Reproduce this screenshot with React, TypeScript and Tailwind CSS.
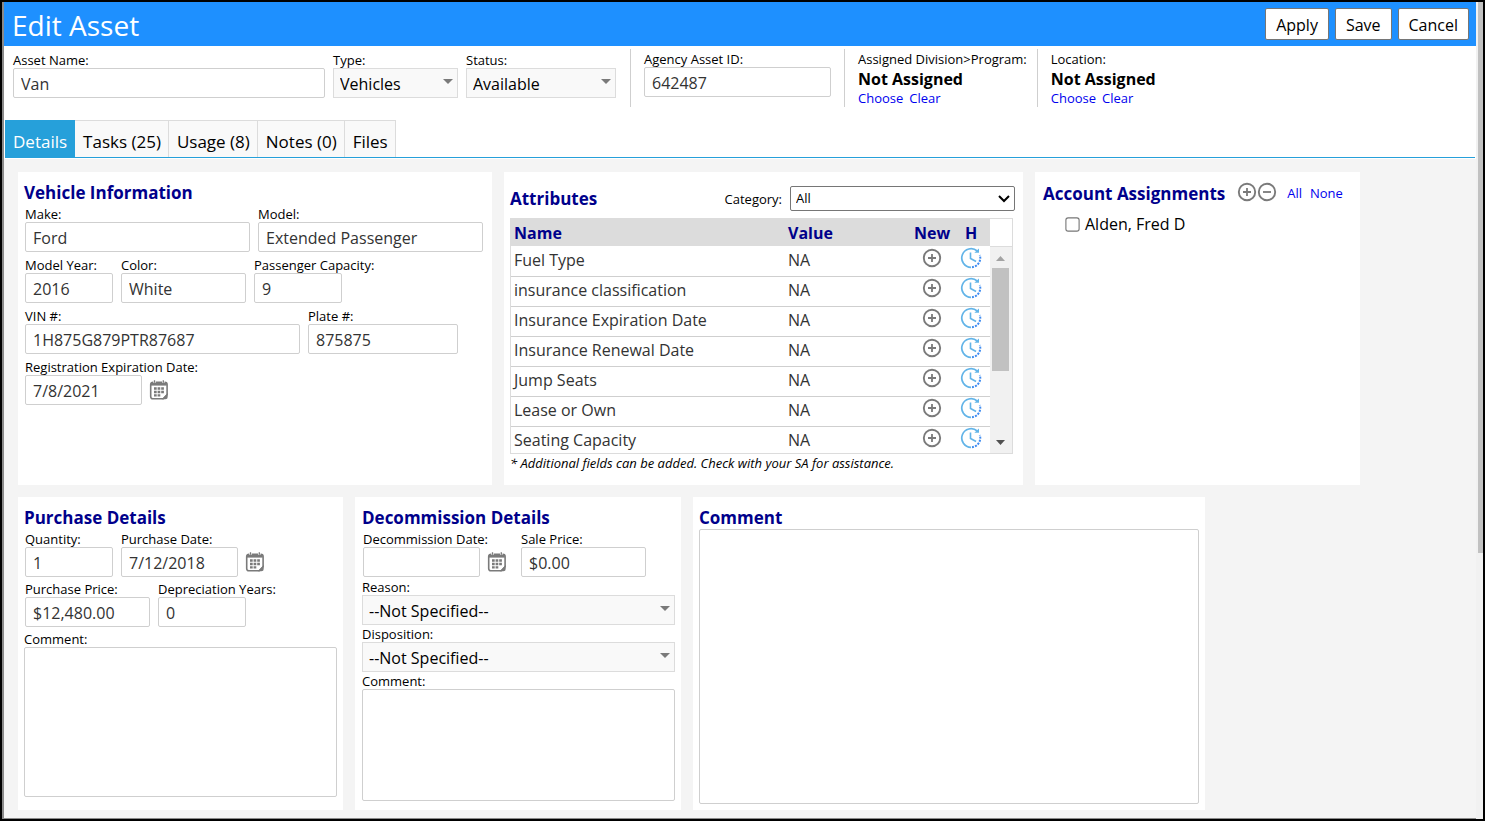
import { FC, ReactNode, useId, useState } from 'react';
import { twMerge } from 'tailwind-merge';

type FieldProps = {
  label: string;
  className?: string;
};

const attributes = [
  'Fuel Type',
  'insurance classification',
  'Insurance Expiration Date',
  'Insurance Renewal Date',
  'Jump Seats',
  'Lease or Own',
  'Seating Capacity',
];

const tabs = ['Details', 'Tasks (25)', 'Usage (8)', 'Notes (0)', 'Files'];

const PlusIcon: FC = () => (
  <svg width="20" height="20" viewBox="0 0 20 20" fill="none" stroke="#7a7a7a">
    <circle cx="10" cy="10" r="8.2" strokeWidth="1.9" />
    <path d="M10 6v8M6 10h8" strokeWidth="1.8" />
  </svg>
);

const MinusIcon: FC = () => (
  <svg width="20" height="20" viewBox="0 0 20 20" fill="none" stroke="#7a7a7a">
    <circle cx="10" cy="10" r="8.2" strokeWidth="1.9" />
    <path d="M6 10h8" strokeWidth="1.8" />
  </svg>
);

const HistoryIcon: FC = () => (
  <svg width="22" height="22" viewBox="0 0 22 22" fill="none">
    <path
      d="M17.2 4A9.3 9.3 0 1 0 11 20.3"
      stroke="#62b4e8"
      strokeWidth="1.7"
    />
    <path
      d="M12 20.2A9.3 9.3 0 0 0 19.8 8"
      stroke="#3f8cf0"
      strokeWidth="2"
      strokeDasharray="2 1.2"
    />
    <path d="M19 1.6v4.2h-4.6z" fill="#62b4e8" />
    <path d="M10.5 5.4v6.1l5.6 3" stroke="#62b4e8" strokeWidth="1.6" />
  </svg>
);

const CalendarIcon: FC = () => (
  <svg width="20" height="20" viewBox="0 0 20 20" fill="none">
    <path
      d="M4 2.2h11.8a2.3 2.3 0 0 1 2.3 2.3v10.2l-3.8 4H4a2.3 2.3 0 0 1-2.3-2.3V4.5A2.3 2.3 0 0 1 4 2.2z"
      stroke="#7a7a7a"
      strokeWidth="1.6"
    />
    <path d="M2 2h15.8v3.6H2z" fill="#7a7a7a" />
    <path d="M5.5.4v2.4M14.3.4v2.4" stroke="#fff" strokeWidth="2.6" />
    <path d="M5.5.2v2.6M14.3.2v2.6" stroke="#7a7a7a" strokeWidth="1.3" />
    <path d="M18.7 13v4a2.3 2.3 0 0 1-2.3 2.3h-3.6z" fill="#7a7a7a" />
    <path
      d="M5 7.2h2.7v2.5H5zM8.6 7.2h2.7v2.5H8.6zM12.2 7.2h2.7v2.5h-2.7zM5 10.7h2.7v2.5H5zM8.6 10.7h2.7v2.5H8.6zM12.2 10.7h2.7v2.5h-2.7zM5 14.2h2.7v2.4H5zM8.6 14.2h2.7v2.4H8.6z"
      fill="#7a7a7a"
    />
  </svg>
);

const labelClass = 'block text-[13px] leading-4 whitespace-nowrap text-black';

const TextField: FC<FieldProps & { value?: string; children?: ReactNode }> = ({
  label,
  value = '',
  className,
  children,
}) => {
  const id = useId();
  return (
    <div className={twMerge('min-w-0', className)}>
      <label htmlFor={id} className={labelClass}>
        {label}
      </label>
      <div className="flex items-center gap-[7px]">
        <input
          id={id}
          defaultValue={value}
          className="h-[30px] w-full min-w-0 flex-1 rounded-xs border border-[#cfcfcf] bg-white px-[7px] pt-px text-base text-[#333]"
        />
        {children}
      </div>
    </div>
  );
};

const SelectField: FC<FieldProps & { value: string }> = ({
  label,
  value,
  className,
}) => {
  const id = useId();
  return (
    <div className={className}>
      <label htmlFor={id} className={labelClass}>
        {label}
      </label>
      <div className="relative">
        <select
          id={id}
          className="block h-[30px] w-full appearance-none border border-[#dcdcdc] bg-[#f9f9f9] px-1.5 pt-px text-base text-black"
        >
          <option>{value}</option>
        </select>
        <svg
          className="pointer-events-none absolute top-[11px] right-[5px]"
          width="10"
          height="5"
          viewBox="0 0 10 5"
        >
          <path d="M0 0h10L5 5z" fill="#7a7a7a" />
        </svg>
      </div>
    </div>
  );
};

const TextArea: FC<FieldProps> = ({ label, className }) => {
  const id = useId();
  return (
    <div>
      <label htmlFor={id} className={labelClass}>
        {label}
      </label>
      <textarea
        id={id}
        className={twMerge(
          'block w-full resize-none rounded-xs border border-[#cfcfcf] bg-white p-2 text-base',
          className
        )}
      />
    </div>
  );
};

const DateButton: FC<{ label: string }> = ({ label }) => (
  <button type="button" aria-label={label} className="shrink-0">
    <CalendarIcon />
  </button>
);

const Panel: FC<{ className?: string; children: ReactNode }> = ({
  className,
  children,
}) => (
  <section className={twMerge('min-h-[313px] bg-white px-1.5 pt-2.5', className)}>
    {children}
  </section>
);

const PanelTitle: FC<{ children: ReactNode }> = ({ children }) => (
  <h2 className="text-[17px] leading-[22px] font-bold whitespace-nowrap text-[#00008b]">
    {children}
  </h2>
);

const Assignment: FC<{ label: string }> = ({ label }) => (
  <div className="h-[58px] border-l border-[#cfcfcf] pt-0.5 pr-2.5 pl-[13px] whitespace-nowrap">
    <div className="text-[13px] leading-4">{label}</div>
    <div className="text-base leading-6 font-bold">Not Assigned</div>
    <div className="flex gap-1.5 text-[13px] leading-[14px] text-[#0000ee]">
      <a href="#choose">Choose</a>
      <a href="#clear">Clear</a>
    </div>
  </div>
);

const Header: FC = () => (
  <header className="flex h-11 items-center justify-between bg-[#1e90ff] pr-[7px] pl-2">
    <h1 className="pt-0.5 text-[28px] text-white">Edit Asset</h1>
    <div className="flex gap-1.5">
      {['Apply', 'Save', 'Cancel'].map((name) => (
        <button
          key={name}
          type="button"
          className="h-8 rounded-xs border border-[#767676] bg-white px-2.5 pt-0.5 text-base text-black"
        >
          {name}
        </button>
      ))}
    </div>
  </header>
);

const AssetBar: FC = () => (
  <div className="flex h-[74px] items-start pt-[3px] pl-[9px]">
    <div className="flex gap-2 pt-[3px] pr-3.5">
      <TextField label="Asset Name:" value="Van" className="w-[312px]" />
      <SelectField label="Type:" value="Vehicles" className="w-[125px]" />
      <SelectField label="Status:" value="Available" className="w-[150px]" />
    </div>
    <div className="h-[58px] border-l border-[#cfcfcf] px-[13px] pt-0.5">
      <TextField
        label="Agency Asset ID:"
        value="642487"
        className="w-[187px]"
      />
    </div>
    <Assignment label="Assigned Division>Program:" />
    <Assignment label="Location:" />
  </div>
);

const Tabs: FC = () => {
  const [active, setActive] = useState(tabs[0]);
  return (
    <nav className="mx-px flex border-b border-[#26a0da]" role="tablist">
      {tabs.map((tab) => (
        <button
          key={tab}
          type="button"
          role="tab"
          aria-selected={tab === active}
          onClick={() => setActive(tab)}
          className={twMerge(
            'h-[37px] border-t border-r border-[#dcdcdc] bg-[#f9f9f9] pt-1.5 pr-[7px] pl-2 text-[17px] leading-6 text-black',
            tab === active && 'border-[#26a0da] bg-[#26a0da] text-white'
          )}
        >
          {tab}
        </button>
      ))}
    </nav>
  );
};

const VehicleInformation: FC = () => (
  <Panel className="basis-[474px]">
    <PanelTitle>Vehicle Information</PanelTitle>
    <div className="mt-0.5 flex flex-col gap-[5px] pl-px">
      <div className="flex gap-2">
        <TextField label="Make:" value="Ford" className="w-[225px]" />
        <TextField
          label="Model:"
          value="Extended Passenger"
          className="w-[225px]"
        />
      </div>
      <div className="flex gap-2">
        <TextField label="Model Year:" value="2016" className="w-[88px]" />
        <TextField label="Color:" value="White" className="w-[125px]" />
        <TextField label="Passenger Capacity:" value="9" className="w-[88px]" />
      </div>
      <div className="flex gap-2">
        <TextField
          label="VIN #:"
          value="1H875G879PTR87687"
          className="w-[275px]"
        />
        <TextField label="Plate #:" value="875875" className="w-[150px]" />
      </div>
      <TextField
        label="Registration Expiration Date:"
        value="7/8/2021"
        className="w-36"
      >
        <DateButton label="Pick registration expiration date" />
      </TextField>
    </div>
  </Panel>
);

const AttributesTable: FC = () => (
  <div className="mr-0.5 flex h-[236px] overflow-hidden border border-[#dcdcdc]">
    <table className="w-full flex-1 table-fixed border-collapse self-start text-left">
      <colgroup>
        <col />
        <col className="w-[124px]" />
        <col className="w-10" />
        <col className="w-[38px]" />
      </colgroup>
      <thead>
        <tr className="h-[27px] bg-[#dcdcdc] text-base leading-6 text-[#00008b]">
          <th className="px-[3px]">Name</th>
          <th>Value</th>
          <th className="text-center">New</th>
          <th className="text-center">H</th>
        </tr>
      </thead>
      <tbody>
        {attributes.map((name) => (
          <tr
            key={name}
            className="h-[30px] border-b border-[#cfcfcf] text-base leading-6 text-[#333]"
          >
            <td className="px-[3px] pb-0.5">{name}</td>
            <td className="pb-0.5">NA</td>
            <td className="pb-1.5">
              <button
                type="button"
                aria-label={`New ${name}`}
                className="mx-auto block"
              >
                <PlusIcon />
              </button>
            </td>
            <td className="pb-1.5">
              <button
                type="button"
                aria-label={`History of ${name}`}
                className="mx-auto block"
              >
                <HistoryIcon />
              </button>
            </td>
          </tr>
        ))}
      </tbody>
    </table>
    <div className="flex w-[22px] shrink-0 flex-col">
      <div className="h-[28px] border-b border-[#dcdcdc]" />
      <div className="flex flex-1 flex-col items-center bg-[#f1f1f1] pt-[9px] pr-0.5 pb-2">
        <svg width="9" height="5" viewBox="0 0 9 5">
          <path d="M0 5h9L4.5 0z" fill="#a3a3a3" />
        </svg>
        <div className="mt-[7px] h-[103px] w-[17px] bg-[#c1c1c1]" />
        <svg className="mt-auto" width="9" height="5" viewBox="0 0 9 5">
          <path d="M0 0h9L4.5 5z" fill="#505050" />
        </svg>
      </div>
    </div>
  </div>
);

const Attributes: FC = () => (
  <Panel className="basis-[519px] pt-3.5 pr-2">
    <div className="mb-[7px] flex items-center justify-between">
      <PanelTitle>Attributes</PanelTitle>
      <div className="flex items-center gap-2">
        <label htmlFor="category" className={labelClass}>
          Category:
        </label>
        <div className="relative">
          <select
            id="category"
            className="block h-[25px] w-[225px] appearance-none rounded-xs border border-[#767676] bg-white px-[5px] text-[13px] text-black"
          >
            <option>All</option>
          </select>
          <svg
            className="pointer-events-none absolute top-[9px] right-[5px]"
            width="12"
            height="8"
            viewBox="0 0 12 8"
            fill="none"
          >
            <path d="M1 1l5 5 5-5" stroke="#000" strokeWidth="2" />
          </svg>
        </div>
      </div>
    </div>
    <AttributesTable />
    <p className="text-[13px] leading-[18px] italic">
      * Additional fields can be added. Check with your SA for assistance.
    </p>
  </Panel>
);

const AccountAssignments: FC = () => (
  <Panel className="basis-[325px] px-2">
    <div className="flex items-center">
      <PanelTitle>Account Assignments</PanelTitle>
      <div className="ml-3 flex pb-1">
        <button type="button" aria-label="Expand all">
          <PlusIcon />
        </button>
        <button type="button" aria-label="Collapse all">
          <MinusIcon />
        </button>
      </div>
      <div className="ml-2.5 flex gap-2 text-[13px] text-[#0000ee]">
        <a href="#all">All</a>
        <a href="#none">None</a>
      </div>
    </div>
    <label className="mt-2 ml-[23px] flex items-center gap-1.5 text-base leading-5">
      <input type="checkbox" className="size-[13px] scale-110" />
      Alden, Fred D
    </label>
  </Panel>
);

const PurchaseDetails: FC = () => (
  <Panel className="basis-[325px]">
    <PanelTitle>Purchase Details</PanelTitle>
    <div className="mt-0.5 flex flex-col gap-1">
      <div className="flex gap-2 pl-px">
        <TextField label="Quantity:" value="1" className="w-[88px]" />
        <TextField
          label="Purchase Date:"
          value="7/12/2018"
          className="w-36"
        >
          <DateButton label="Pick purchase date" />
        </TextField>
      </div>
      <div className="flex gap-2 pl-px">
        <TextField
          label="Purchase Price:"
          value="$12,480.00"
          className="w-[125px]"
        />
        <TextField label="Depreciation Years:" value="0" className="w-[88px]" />
      </div>
      <TextArea label="Comment:" className="h-[150px]" />
    </div>
  </Panel>
);

const DecommissionDetails: FC = () => (
  <Panel className="basis-[326px] pl-[7px]">
    <PanelTitle>Decommission Details</PanelTitle>
    <div className="mt-0.5 flex flex-col gap-px">
      <div className="flex gap-3.5 pb-px pl-px">
        <TextField label="Decommission Date:" className="w-36">
          <DateButton label="Pick decommission date" />
        </TextField>
        <TextField label="Sale Price:" value="$0.00" className="w-[125px]" />
      </div>
      <SelectField label="Reason:" value="--Not Specified--" />
      <SelectField label="Disposition:" value="--Not Specified--" />
      <TextArea label="Comment:" className="h-[112px]" />
    </div>
  </Panel>
);

const Comment: FC = () => (
  <Panel className="basis-[512px]">
    <PanelTitle>Comment</PanelTitle>
    <textarea
      aria-label="Comment"
      className="block h-[275px] w-full resize-none rounded-xs border border-[#cfcfcf] bg-white p-2 text-base"
    />
  </Panel>
);

export default function App() {
  return (
    <div className="flex min-h-screen border-2 border-black bg-white font-['Segoe_UI','Open_Sans',sans-serif] text-black">
      <div className="flex min-w-0 flex-1 flex-col border-b border-l-2 border-[#8a8a8a]">
        <Header />
        <AssetBar />
        <Tabs />
        <main className="mt-px flex flex-1 flex-col gap-3 bg-[#f4f4f4] px-3.5 pt-[13px] pb-2">
          <div className="flex gap-3">
            <VehicleInformation />
            <Attributes />
            <AccountAssignments />
          </div>
          <div className="flex gap-3">
            <PurchaseDetails />
            <DecommissionDetails />
            <Comment />
          </div>
        </main>
      </div>
      <div className="w-[7px] shrink-0 bg-[#f1f1f1] pl-0.5">
        <div className="h-[551px] bg-[#c1c1c1]" />
      </div>
    </div>
  );
}
